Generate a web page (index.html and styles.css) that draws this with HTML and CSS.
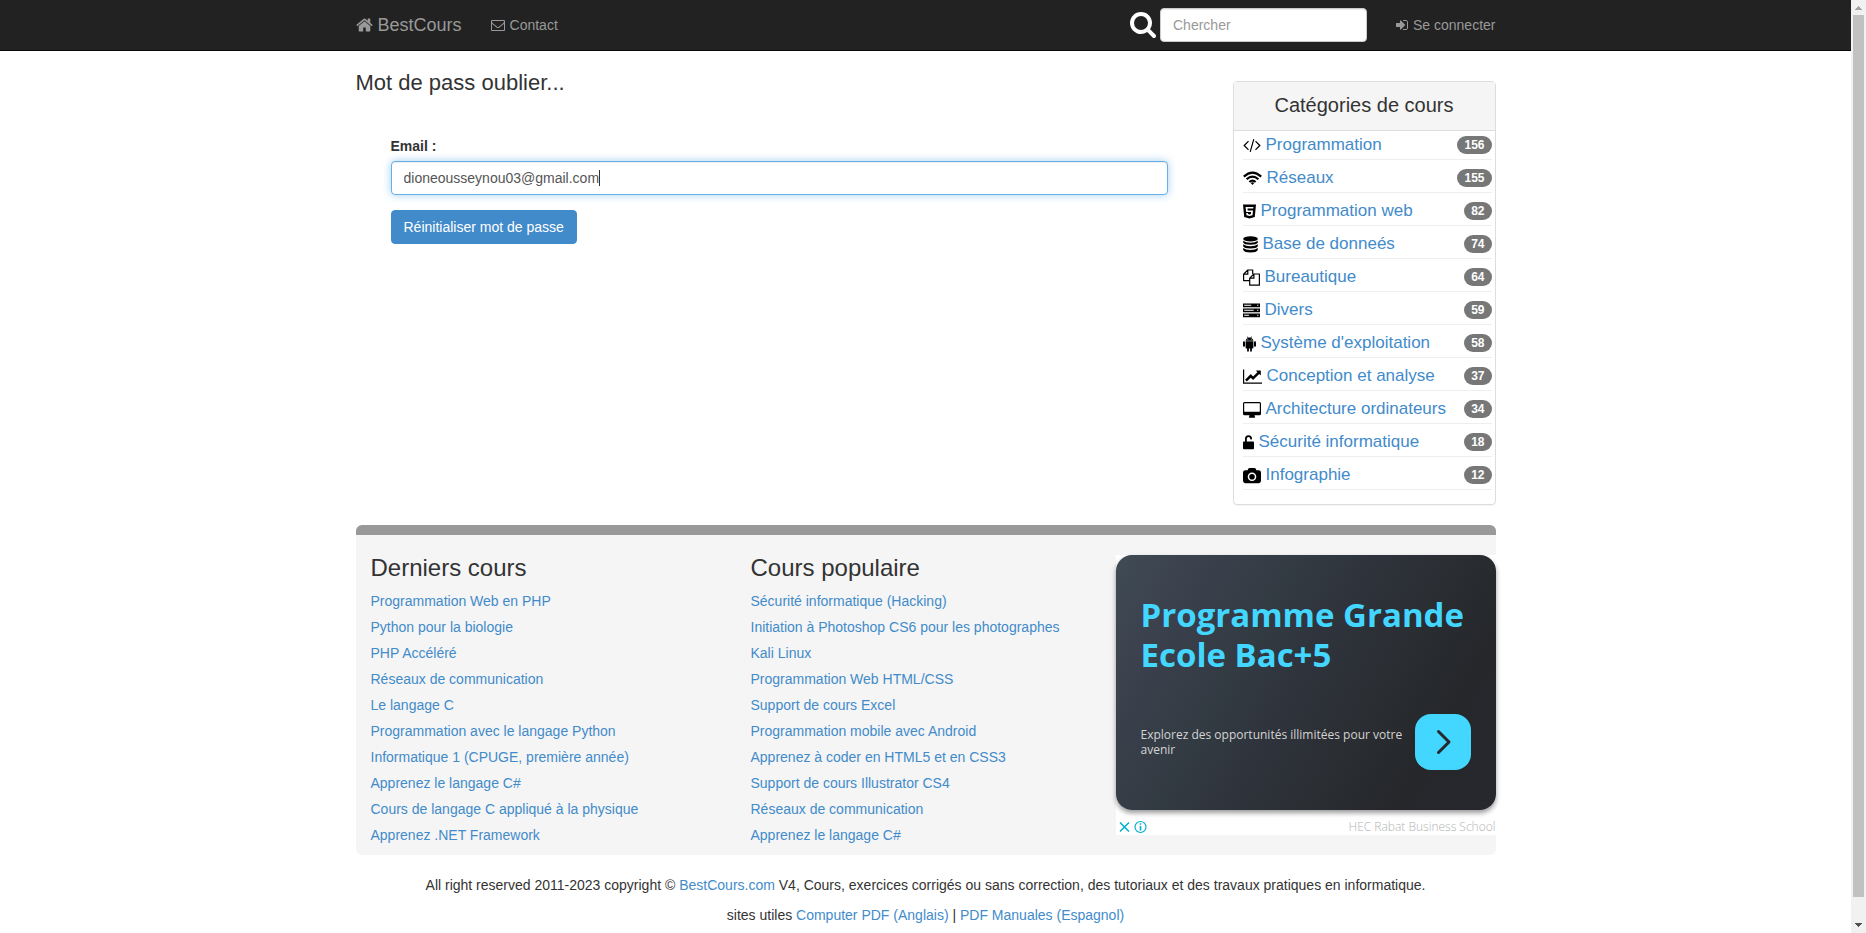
FILE: index.html
```html
<!DOCTYPE html>
<html lang="fr">
<head>
<meta charset="utf-8">
<title>BestCours - Mot de passe oublié</title>
<link rel="stylesheet" href="styles.css">
</head>
<body>
<nav class="navbar">
  <div class="container navbar-row">
    <a class="brand" href="#"><svg class="icon icon-home" viewBox="64 0 1664 1792"><path d="M1472 992v480q0 26-19 45t-45 19h-384v-384h-256v384h-384q-26 0-45-19t-19-45v-480q0-1 .5-3t.5-3l575-474 575 474q1 2 1 6zm223-69l-62 74q-8 9-21 11h-3q-13 0-21-7l-692-577-692 577q-12 8-24 7-13-2-21-11l-62-74q-8-10-7-23.5t11-21.5l719-599q32-26 76-26t76 26l244 204v-195q0-14 9-23t23-9h192q14 0 23 9t9 23v408l219 182q10 8 11 21.5t-7 23.5z"/></svg> BestCours</a>
    <a class="nav-link" href="#"><svg class="icon icon-14" viewBox="0 0 1792 1792"><path d="M1664 1504v-768q-32 36-69 66-268 206-426 338-51 43-83 67t-86.5 48.5-102.5 24.5h-2q-48 0-102.5-24.5t-86.5-48.5-83-67q-158-132-426-338-37-30-69-66v768q0 13 9.5 22.5t22.5 9.5h1472q13 0 22.5-9.5t9.5-22.5zm0-1051v-24.5l-.5-13-3-12.5-5.5-9-9-7.5-14-2.5h-1472q-13 0-22.5 9.5t-9.5 22.5q0 168 147 284 193 152 401 317 6 5 35 29.5t46 37.5 44.5 31.5 50.5 27.5 43 9h2q20 0 43-9t50.5-27.5 44.5-31.5 46-37.5 35-29.5q208-165 401-317 54-43 100.5-115.5t46.5-131.5zm128-37v1088q0 66-47 113t-113 47h-1472q-66 0-113-47t-47-113v-1088q0-66 47-113t113-47h1472q66 0 113 47t47 113z"/></svg> Contact</a>
    <form class="search">
      <label for="q" aria-label="Chercher"><svg class="icon icon-search" viewBox="64 128 1664 1664"><path d="M1216 832q0-185-131.5-316.5t-316.5-131.5-316.5 131.5-131.5 316.5 131.5 316.5 316.5 131.5 316.5-131.5 131.5-316.5zm512 832q0 52-38 90t-90 38q-54 0-90-38l-343-342q-179 124-399 124-143 0-273.5-55.5t-225-150-150-225-55.5-273.5 55.5-273.5 150-225 225-150 273.5-55.5 273.5 55.5 225 150 150 225 55.5 273.5q0 220-124 399l343 343q37 37 37 90z"/></svg></label>
      <input class="control search-input" id="q" type="text" placeholder="Chercher">
    </form>
    <a class="nav-link login" href="#"><svg class="icon icon-login" viewBox="128 0 1536 1792"><path d="M1312 896q0 26-19 45l-544 544q-19 19-45 19t-45-19-19-45v-288h-448q-26 0-45-19t-19-45v-384q0-26 19-45t45-19h448v-288q0-26 19-45t45-19 45 19l544 544q19 19 19 45zm352-352v704q0 119-84.5 203.5t-203.5 84.5h-320q-13 0-22.5-9.5t-9.5-22.5q0-4-1-20t-.5-26.5 3-23.5 10-19.5 20.5-6.5h320q66 0 113-47t47-113v-704q0-66-47-113t-113-47h-312l-11.5-1-11.5-3-8-5.5-7-9-2-13.5q0-4-1-20t-.5-26.5 3-23.5 10-19.5 20.5-6.5h320q119 0 203.5 84.5t84.5 203.5z"/></svg> Se connecter</a>
  </div>
</nav>

<div class="container content">
  <main class="main">
    <h1 class="title">Mot de pass oublier...</h1>
    <form class="reset">
      <label class="field-label" for="email">Email :</label>
      <div class="field">
        <input class="control control-active" id="email" type="text" value="dioneousseynou03@gmail.com">
        <span class="caret"></span>
      </div>
      <button class="btn" type="button">Réinitialiser mot de passe</button>
    </form>
  </main>

  <aside class="panel">
    <h2 class="panel-title">Catégories de cours</h2>
    <ul class="cats">
      <li><svg class="icon" width="18" height="17" viewBox="-64 64 1920 1792"><path d="M553 1399l-50 50q-10 10-23 10t-23-10l-466-466q-10-10-10-23t10-23l466-466q10-10 23-10t23 10l50 50q10 10 10 23t-10 23l-393 393 393 393q10 10 10 23t-10 23zm591-1067l-373 1291q-4 13-15.5 19.5t-23.5 2.5l-62-17q-13-4-19.5-15.5t-2.5-24.5l373-1291q4-13 15.5-19.5t23.5-2.5l62 17q13 4 19.5 15.5t2.5 24.5zm657 651l-466 466q-10 10-23 10t-23-10l-50-50q-10-10-10-23t10-23l393-393-393-393q-10-10-10-23t10-23l50-50q10-10 23-10t23 10l466 466q10 10 10 23t-10 23z"/></svg><a href="#">Programmation</a><span class="badge">156</span></li>
      <li><svg class="icon" width="19" height="17" viewBox="0 0 19 17"><g fill="none" stroke="#000" stroke-width="2.200"><path d="M.8 6.600Q9.500-1.400 18.200 6.600M3.600 9.300Q9.500 3.800 15.400 9.300M6.400 12Q9.500 9.100 12.600 12"/></g><path d="M7.700 13q1.800-1.500 3.600 0L9.500 14.900z"/></svg><a href="#">Réseaux</a><span class="badge">155</span></li>
      <li><svg class="icon" width="13" height="17" viewBox="0 0 13 17"><path fill-rule="evenodd" d="M0 1.500h13l-1.200 12.500L6.500 15.500l-5.300-1.500zM2.600 4l.5 5h5l-.2 2-1.400.5-1.500-.5-.1-.9H3.300l.2 2.100 3 .9 3-.9.5-4.800H4.700l-.2-1.800h5.700l.2-1.600z"/></svg><a href="#">Programmation web</a><span class="badge">82</span></li>
      <li><svg class="icon" width="15" height="17" viewBox="0 0 15 17"><ellipse cx="7.500" cy="2.900" rx="7.300" ry="2.600"/><path d="M.2 4.700q2.300 2 7.300 2t7.300-2v1.900q-1 2.200-7.300 2.200T.2 6.600zM.2 8.300q2.300 2 7.300 2t7.300-2v1.900q-1 2.200-7.300 2.200T.2 10.200zM.2 11.900q2.300 2 7.300 2t7.300-2v2q-1 2.500-7.300 2.500T.2 13.900z"/></svg><a href="#">Base de donneés</a><span class="badge">74</span></li>
      <li><svg class="icon" width="17" height="17" viewBox="0 0 17 17"><path fill="none" stroke="#000" stroke-width="1.200" stroke-linejoin="round" d="M6.700 11.600H.6V5.200L4.800 1h4.900v4M4.800 1v4.200H.6M6.700 9.200L10.900 5h5.500v11.200H6.700zM10.900 5v4.200H6.700"/></svg><a href="#">Bureautique</a><span class="badge">64</span></li>
      <li><svg class="icon" width="17" height="17" viewBox="0 0 17 17"><path fill-rule="evenodd" d="M0 1.500h17v3.700H0zM0 6.500h17v3.700H0zM0 11.500h17v3.700H0zM1.200 2.800v1h7v-1zM1.200 7.800v1h9.500v-1zM1.200 12.800v1h4.700v-1zM14.200 2.800v1h1.200v-1zM14.200 7.800v1h1.200v-1zM14.200 12.800v1h1.200v-1z"/></svg><a href="#">Divers</a><span class="badge">59</span></li>
      <li><svg class="icon" width="13" height="17" viewBox="0 0 13 17"><path fill-rule="evenodd" d="M4 1.500l.3-.2.8 1.300a5 5 0 0 1 2.800 0l.8-1.300.3.200-.7 1.400Q10.300 4 10.400 5.800H2.600Q2.700 4 4.700 2.900zM4.500 4v.7h.7V4zM7.800 4v.7h.7V4zM2.600 6.300h7.800v6.400q0 .8-.8.800h-.7v2.300q0 1-.9 1t-.9-1v-2.300H5.900v2.300q0 1-.9 1t-.9-1v-2.300h-.7q-.8 0-.8-.8z"/><rect y="6.200" width="2" height="5.600" rx="1"/><rect x="11" y="6.200" width="2" height="5.600" rx="1"/></svg><a href="#">Système d'exploitation</a><span class="badge">58</span></li>
      <li><svg class="icon" width="19" height="17" viewBox="0 0 2048 1792"><path d="M2048 1536v128h-2048v-1536h128v1408h1920zm-128-1248v435q0 21-19.500 29.500t-35.500-7.500l-121-121-633 633q-10 10-23 10t-23-10l-233-233-416 416-192-192 585-585q10-10 23-10t23 10l233 233 464-464-121-121q-16-16-7.500-35.500t29.500-19.500h435q14 0 23 9t9 23z"/></svg><a href="#">Conception et analyse</a><span class="badge">37</span></li>
      <li><svg class="icon" width="18" height="17" viewBox="0 0 18 17"><path fill-rule="evenodd" d="M1.500 1h15Q18 1 18 2.500v10.200q0 1.500-1.500 1.500h-5q0 1 .7 1.800 0 .7-.7.700h-5q-.7 0-.7-.7.700-.8.700-1.800h-5Q0 14.200 0 12.700V2.500Q0 1 1.500 1zm0 1.200q-.3 0-.3.3v7.900q0 .3.3.3h15q.3 0 .3-.3V2.500q0-.3-.3-.3z"/></svg><a href="#">Architecture ordinateurs</a><span class="badge">34</span></li>
      <li><svg class="icon" width="11" height="17" viewBox="0 0 11 17"><path d="M.9 7.500H2V4.700a3.500 3.500 0 0 1 7 0q0 .8-.6.800h-.6q-.6 0-.6-.8a1.700 1.700 0 0 0-3.400 0v2.800h6.300q.9 0 .9.900v5.900q0 .9-.9.900H.9q-.9 0-.9-.9V8.400q0-.9.900-.9z"/></svg><a href="#">Sécurité informatique</a><span class="badge">18</span></li>
      <li><svg class="icon" width="18" height="17" viewBox="0 0 18 17"><path fill-rule="evenodd" d="M2.400 3.200h2.200l.5-1.300Q5.500 1 6.600 1h4.800q1.100 0 1.500.9l.5 1.300h2.200Q18 3.200 18 5.600v8.200q0 2.400-2.400 2.400H2.400Q0 16.200 0 13.800V5.600q0-2.400 2.400-2.400zM9 5.400a4.300 4.300 0 1 0 0 8.600 4.300 4.300 0 0 0 0-8.600zm0 1.500a2.800 2.800 0 1 1 0 5.600 2.800 2.800 0 0 1 0-5.600z"/></svg><a href="#">Infographie</a><span class="badge">12</span></li>
    </ul>
  </aside>
</div>

<footer class="container">
  <div class="foot">
    <section class="foot-col">
      <h3>Derniers cours</h3>
      <ul>
        <li><a href="#">Programmation Web en PHP</a></li>
        <li><a href="#">Python pour la biologie</a></li>
        <li><a href="#">PHP Accéléré</a></li>
        <li><a href="#">Réseaux de communication</a></li>
        <li><a href="#">Le langage C</a></li>
        <li><a href="#">Programmation avec le langage Python</a></li>
        <li><a href="#">Informatique 1 (CPUGE, première année)</a></li>
        <li><a href="#">Apprenez le langage C#</a></li>
        <li><a href="#">Cours de langage C appliqué à la physique</a></li>
        <li><a href="#">Apprenez .NET Framework</a></li>
      </ul>
    </section>
    <section class="foot-col">
      <h3>Cours populaire</h3>
      <ul>
        <li><a href="#">Sécurité informatique (Hacking)</a></li>
        <li><a href="#">Initiation à Photoshop CS6 pour les photographes</a></li>
        <li><a href="#">Kali Linux</a></li>
        <li><a href="#">Programmation Web HTML/CSS</a></li>
        <li><a href="#">Support de cours Excel</a></li>
        <li><a href="#">Programmation mobile avec Android</a></li>
        <li><a href="#">Apprenez à coder en HTML5 et en CSS3</a></li>
        <li><a href="#">Support de cours Illustrator CS4</a></li>
        <li><a href="#">Réseaux de communication</a></li>
        <li><a href="#">Apprenez le langage C#</a></li>
      </ul>
    </section>
    <section class="ad">
      <div class="ad-card">
        <a class="ad-title" href="#">Programme Grande Ecole Bac+5</a>
        <div class="ad-row">
          <a class="ad-text" href="#">Explorez des opportunités illimitées pour votre avenir</a>
          <button class="ad-go" type="button" aria-label="Ouvrir"><svg width="56" height="56" viewBox="0 0 56 56"><path d="M23.500 17.500L34 28 23.500 38.500" fill="none" stroke="#26282d" stroke-width="3" stroke-linecap="round" stroke-linejoin="round"/></svg></button>
        </div>
      </div>
      <div class="ad-foot">
        <svg width="30" height="14" viewBox="0 0 30 14" fill="none" stroke="#00aecd"><path stroke-width="1.500" d="M1 2.500l9 9M10 2.500l-9 9"/><circle cx="21.500" cy="7" r="5.500" stroke-width="1.200"/><path stroke-width="1.600" d="M21.500 6v4.500M21.500 3.300v1.500"/></svg>
        <a class="ad-owner" href="#">HEC Rabat Business School</a>
      </div>
    </section>
  </div>
  <p class="legal">All right reserved 2011-2023 copyright © <a href="#">BestCours.com</a> V4, Cours, exercices corrigés ou sans correction, des tutoriaux et des travaux pratiques en informatique.</p>
  <p class="legal">sites utiles <a href="#">Computer PDF (Anglais)</a> | <a href="#">PDF Manuales (Espagnol)</a></p>
</footer>

<div class="scrollbar" aria-hidden="true">
  <svg width="15" height="15" viewBox="0 0 15 15"><path fill="#a3a3a3" d="M7 6h1v1h1v1h1v1h1v1H4V9h1V8h1V7h1z"/></svg>
  <div class="scroll-track"><div class="scroll-thumb"></div></div>
  <svg width="15" height="15" viewBox="0 0 15 15"><path fill="#505050" d="M4 5h7v1h-1v1H9v1H8v1H7V8H6V7H5V6H4z"/></svg>
</div>
</body>
</html>
```
FILE: styles.css
```css
* { box-sizing: border-box; }

body {
  margin: 0;
  padding-right: 15px;
  background: #fff;
  color: #333;
  font: 14px/20px "Liberation Sans", Arial, sans-serif;
}

a { color: #428bca; text-decoration: none; }
ul { list-style: none; margin: 0; padding: 0; }
h1, h2, h3, p { margin: 0; font-weight: 400; }
svg { flex: none; }

.container { max-width: 1140px; margin: 0 auto; }
.icon { fill: currentColor; }

.navbar { background: #222; border-bottom: 1px solid #080808; }
.navbar-row { display: flex; align-items: center; height: 50px; }
.brand, .nav-link { display: flex; align-items: center; gap: 5px; color: #999; }
.brand { margin-right: 29px; font-size: 18px; }
.icon-home { width: 17px; height: 18px; }
.icon-14 { width: 14px; height: 14px; }
.icon-login { width: 12px; height: 14px; }
.search { display: flex; align-items: center; gap: 4px; margin-left: auto; }
.search label { display: flex; color: #fff; }
.icon-search { width: 26px; height: 26px; }
.search-input { width: 207px; }
.login { margin-left: 29px; }

.control {
  display: block;
  height: 34px;
  padding: 6px 12px;
  border: 1px solid #ccc;
  border-radius: 4px;
  background: #fff;
  box-shadow: inset 0 1px 1px rgba(0, 0, 0, .075);
  color: #555;
  font: inherit;
}
.control::placeholder { color: #999; opacity: 1; }
.control-active {
  width: 100%;
  border-color: #66afe9;
  outline: 0;
  box-shadow: inset 0 1px 1px rgba(0, 0, 0, .075), 0 0 8px rgba(102, 175, 233, .6);
}

.content { display: flex; align-items: flex-start; justify-content: space-between; gap: 30px; padding: 20px 0; }
.main { flex: 1; }
.title { font-size: 22px; line-height: 24px; }
.reset { padding: 41px 35px 0; }
.field-label { display: block; margin-bottom: 5px; line-height: 20px; font-weight: 700; }
.field { position: relative; margin-bottom: 15px; }
.caret { position: absolute; left: 208px; top: 9px; width: 1px; height: 16px; background: #333; }
.btn {
  height: 34px;
  padding: 6px 12px;
  border: 1px solid #428bca;
  border-radius: 4px;
  background: #428bca;
  color: #fff;
  font: inherit;
}

.panel {
  width: 263px;
  margin-top: 10px;
  border: 1px solid #ddd;
  border-radius: 4px;
  box-shadow: 0 1px 1px rgba(0, 0, 0, .05);
}
.panel-title {
  padding: 11px 10px 13px;
  border-bottom: 1px solid #ddd;
  background: #f5f5f5;
  font-size: 20px;
  line-height: 24px;
  text-align: center;
}
.cats { padding: 0 3px 10px 9px; }
.cats li {
  display: flex;
  align-items: center;
  gap: 5px;
  margin-bottom: 4px;
  padding: 2px 0;
  border-bottom: 1px solid #eee;
  color: #000;
  font-size: 17px;
  line-height: 24px;
}
.badge {
  margin-left: auto;
  padding: 3px 7px;
  border-radius: 10px;
  background: #777;
  color: #fff;
  font-size: 12px;
  font-weight: 700;
  line-height: 12px;
}

.foot {
  display: grid;
  grid-template-columns: repeat(3, minmax(0, 1fr));
  margin-bottom: 15px;
  padding: 20px 0;
  border-top: 10px solid #999;
  border-radius: 6px;
  background: #f5f5f5;
}
.foot-col { height: 280px; padding: 0 15px; }
.foot-col h3 { margin-bottom: 7px; font-size: 24px; line-height: 26px; }
.foot-col li { line-height: 26px; }
.legal { line-height: 30px; text-align: center; }

.ad { display: flex; flex-direction: column; background: #fff; font-family: "Open Sans", sans-serif; }
.ad-card {
  display: flex;
  flex-direction: column;
  justify-content: space-between;
  height: 255px;
  padding: 40px 25px;
  border-radius: 16px;
  background: linear-gradient(120deg, #3f4b54 0%, #3b414d 16%, #323a42 36%, #2e323a 52%, #2a2d31 66%, #25272b 80%, #27282d 100%);
  box-shadow: 0 3px 5px rgba(0, 0, 0, .4);
}
.ad-title { color: #43d6ff; font-size: 33px; line-height: 40px; font-weight: 700; }
.ad-row { display: flex; align-items: center; justify-content: space-between; gap: 8px; }
.ad-text { color: #d4d4d4; font-size: 12px; line-height: 15px; }
.ad-go { width: 56px; height: 56px; flex: none; padding: 0; border: 0; border-radius: 16px; background: #43d6ff; }
.ad-go svg { display: block; }
.ad-foot { display: flex; align-items: center; justify-content: space-between; height: 25px; padding: 8px 0 0 3px; }
.ad-owner { color: #b3b3b3; font-size: 12px; font-weight: 300; line-height: 16px; }

.scrollbar {
  position: fixed;
  top: 0;
  right: 0;
  bottom: 0;
  display: flex;
  flex-direction: column;
  width: 15px;
  background: #f1f1f1;
}
.scroll-track { flex: 1; padding: 0 2px; }
.scroll-thumb { height: calc(100% - 21px); background: #c1c1c1; }
```
